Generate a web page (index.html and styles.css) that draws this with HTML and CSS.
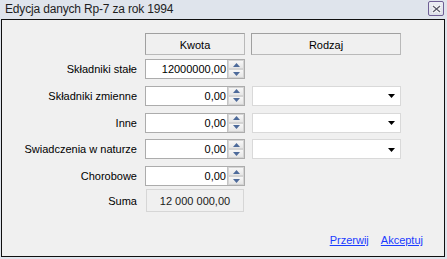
FILE: index.html
```html
<!DOCTYPE html>
<html lang="pl">
<head>
<meta charset="utf-8">
<title>Edycja danych Rp-7 za rok 1994</title>
<link rel="stylesheet" href="styles.css">
</head>
<body>
<div class="window">
  <div class="titlebar">
    <span class="title">Edycja danych Rp-7 za rok 1994</span>
    <div class="close">
      <svg width="9" height="8" viewBox="0 0 9 8">
        <path d="M1.5 1.5 L7.5 6.5 M7.5 1.5 L1.5 6.5" stroke="#ffffff" stroke-width="3" stroke-linecap="square"/>
        <path d="M1.5 1.5 L7.5 6.5 M7.5 1.5 L1.5 6.5" stroke="#5a5a6a" stroke-width="1.4" stroke-linecap="square"/>
      </svg>
    </div>
  </div>
  <div class="panel">
    <div class="form">
      <div class="row head">
        <div></div>
        <div class="colhead">Kwota</div>
        <div class="colhead">Rodzaj</div>
      </div>
      <div class="rows">
        <div class="row">
          <div class="label">Składniki stałe</div>
          <div class="num"><span class="val">12000000,00</span><div class="spin"><div class="btn"><svg width="7" height="4" viewBox="0 0 7 4"><path d="M0 4 L3.5 0 L7 4 Z" fill="#4d6a9a"/></svg></div><div class="btn"><svg width="7" height="4" viewBox="0 0 7 4"><path d="M0 0 L3.5 4 L7 0 Z" fill="#4d6a9a"/></svg></div></div></div>
          <div></div>
        </div>
        <div class="row">
          <div class="label">Składniki zmienne</div>
          <div class="num"><span class="val">0,00</span><div class="spin"><div class="btn"><svg width="7" height="4" viewBox="0 0 7 4"><path d="M0 4 L3.5 0 L7 4 Z" fill="#4d6a9a"/></svg></div><div class="btn"><svg width="7" height="4" viewBox="0 0 7 4"><path d="M0 0 L3.5 4 L7 0 Z" fill="#4d6a9a"/></svg></div></div></div>
          <div class="combo"><svg width="7" height="4" viewBox="0 0 7 4"><path d="M0 0 L7 0 L3.5 4 Z" fill="#000"/></svg></div>
        </div>
        <div class="row">
          <div class="label">Inne</div>
          <div class="num"><span class="val">0,00</span><div class="spin"><div class="btn"><svg width="7" height="4" viewBox="0 0 7 4"><path d="M0 4 L3.5 0 L7 4 Z" fill="#4d6a9a"/></svg></div><div class="btn"><svg width="7" height="4" viewBox="0 0 7 4"><path d="M0 0 L3.5 4 L7 0 Z" fill="#4d6a9a"/></svg></div></div></div>
          <div class="combo"><svg width="7" height="4" viewBox="0 0 7 4"><path d="M0 0 L7 0 L3.5 4 Z" fill="#000"/></svg></div>
        </div>
        <div class="row">
          <div class="label">Swiadczenia w naturze</div>
          <div class="num"><span class="val">0,00</span><div class="spin"><div class="btn"><svg width="7" height="4" viewBox="0 0 7 4"><path d="M0 4 L3.5 0 L7 4 Z" fill="#4d6a9a"/></svg></div><div class="btn"><svg width="7" height="4" viewBox="0 0 7 4"><path d="M0 0 L3.5 4 L7 0 Z" fill="#4d6a9a"/></svg></div></div></div>
          <div class="combo"><svg width="7" height="4" viewBox="0 0 7 4"><path d="M0 0 L7 0 L3.5 4 Z" fill="#000"/></svg></div>
        </div>
        <div class="row">
          <div class="label">Chorobowe</div>
          <div class="num"><span class="val">0,00</span><div class="spin"><div class="btn"><svg width="7" height="4" viewBox="0 0 7 4"><path d="M0 4 L3.5 0 L7 4 Z" fill="#4d6a9a"/></svg></div><div class="btn"><svg width="7" height="4" viewBox="0 0 7 4"><path d="M0 0 L3.5 4 L7 0 Z" fill="#4d6a9a"/></svg></div></div></div>
          <div></div>
        </div>
      </div>
      <div class="row sum">
        <div class="label">Suma</div>
        <div class="sumbox">12 000 000,00</div>
        <div></div>
      </div>
    </div>
    <div class="footer">
      <a class="link" href="#">Przerwij</a>
      <a class="link" href="#">Akceptuj</a>
    </div>
  </div>
</div>
</body>
</html>
```

FILE: styles.css
```css
html, body {
  margin: 0;
  padding: 0;
  background: #dfe4ec;
}
body {
  font-family: "Liberation Sans", Arial, sans-serif;
  font-size: 11px;
  color: #000;
}
.window {
  width: 447px;
  height: 259px;
  background: #dfe4ec;
}
.titlebar {
  height: 19px;
  display: flex;
  align-items: center;
  justify-content: space-between;
  padding-left: 5px;
  padding-right: 3px;
  box-sizing: border-box;
}
.title {
  font-size: 12px;
  letter-spacing: -0.17px;
  color: #1e1e1e;
  line-height: 19px;
  padding-bottom: 1px;
}
.close {
  width: 16px;
  height: 15px;
  box-sizing: border-box;
  border: 1px solid #6f5f95;
  border-radius: 2px;
  background: linear-gradient(#eceef4, #dcdfe8);
  display: flex;
  align-items: center;
  justify-content: center;
  margin-bottom: 2px;
}
.panel {
  margin-left: 1px;
  width: 444px;
  height: 238px;
  box-sizing: border-box;
  border: 1px solid #101010;
  background: #f0f0f0;
  display: flex;
  flex-direction: column;
  padding-top: 13px;
}
.form {
  display: flex;
  flex-direction: column;
}
.row {
  display: grid;
  grid-template-columns: 136px 100px 149px;
  column-gap: 7px;
  height: 20px;
  align-items: stretch;
}
.row > :nth-child(3) {
  margin-left: -1px;
}
.head {
  height: 22px;
  margin-bottom: 4px;
}
.colhead {
  box-sizing: border-box;
  border: 1px solid #a0a0a0;
  border-right-color: #b9b9b9;
  border-bottom-color: #b9b9b9;
  display: flex;
  align-items: center;
  justify-content: center;
  padding-top: 1px;
}
.rows {
  display: flex;
  flex-direction: column;
  gap: 6.75px;
}
.label {
  display: flex;
  align-items: center;
  justify-content: flex-end;
  padding-right: 1px;
}
.num {
  display: flex;
  box-sizing: border-box;
  border: 1px solid #acacac;
  background: #fff;
}
.val {
  flex: 1;
  text-align: right;
  line-height: 18px;
  padding-right: 1px;
}
.spin {
  width: 16px;
  display: flex;
  flex-direction: column;
  border-left: 1px solid #c4c4c4;
  background: #f2f2f2;
}
.btn {
  flex: 1;
  display: flex;
  align-items: center;
  justify-content: center;
  border: 1px solid #d4d4d4;
  background: linear-gradient(#f7f7f7, #e6e6e6);
}
.combo {
  box-sizing: border-box;
  border: 1px solid #d9d9d9;
  background: #fff;
  margin-left: 0 !important;
  margin-right: 0;
  display: flex;
  align-items: center;
  justify-content: flex-end;
  padding-right: 5px;
  padding-top: 1px;
}
.rows .row > .combo {
  margin-left: 0;
}
.sum {
  height: 23px;
  margin-top: 3px;
}
.sumbox {
  margin-left: 1px;
  margin-right: 1px;
  box-sizing: border-box;
  border: 1px solid #d6d6d6;
  background: #f0f0f0;
  display: flex;
  align-items: center;
  justify-content: center;
  color: #1a1a1a;
}
.footer {
  margin-top: auto;
  display: flex;
  justify-content: flex-end;
  gap: 12px;
  padding-right: 21px;
  padding-bottom: 9px;
}
.link {
  color: #1a3cff;
  text-decoration: underline;
  line-height: 13px;
}
```
